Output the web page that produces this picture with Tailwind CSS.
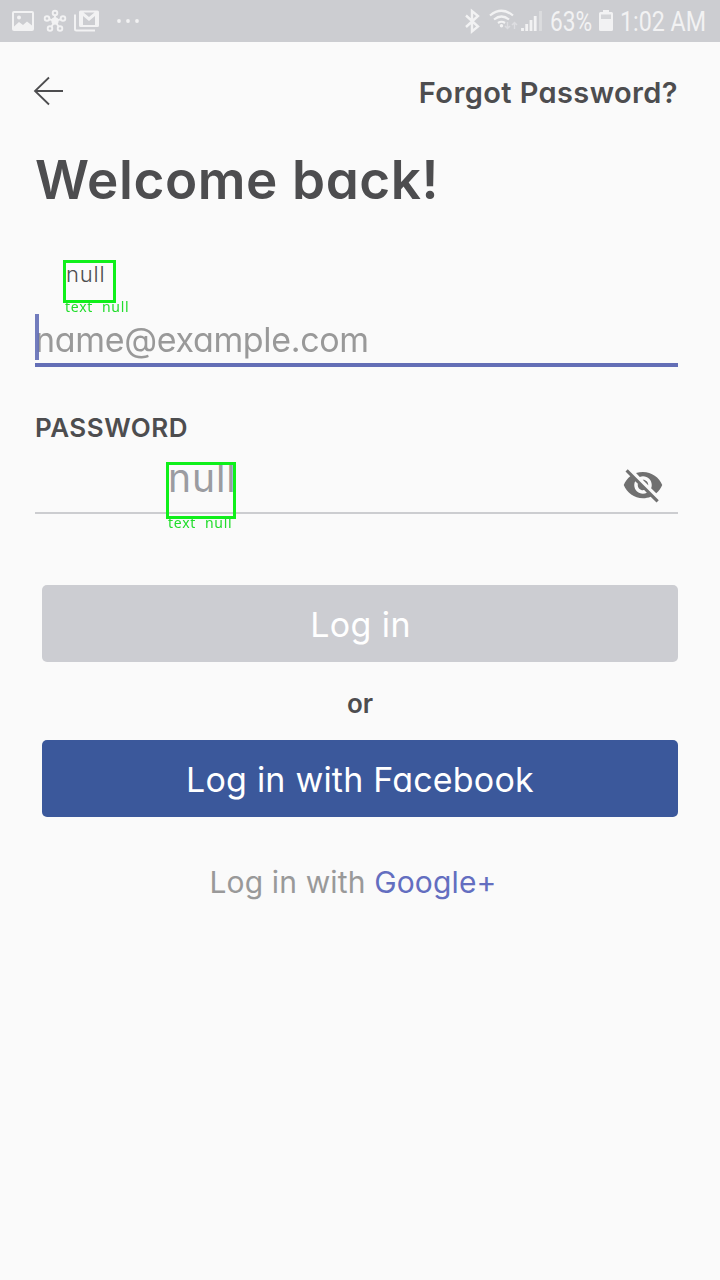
<!DOCTYPE html>
<html lang="en">
<head>
<meta charset="utf-8">
<title>Log in</title>
<script src="https://cdn.jsdelivr.net/npm/@tailwindcss/browser@4"></script>
</head>
<body class="bg-[#fafafa]">
<div class="w-[720px] h-[1280px] overflow-hidden flex flex-col bg-[#fafafa] text-[#4d4d4f] font-['Inter','Lato',sans-serif] [font-feature-settings:'cv11'] whitespace-nowrap">
  <header class="h-[42px] shrink-0 bg-[#cccdd1] flex items-center text-[#f2f2f3]">
    <svg class="w-[150px] h-[42px]" viewBox="0 0 150 42" fill="none" stroke="currentColor">
      <path fill="currentColor" stroke="none" fill-rule="evenodd" d="M14 11h18q2 0 2 2v16q0 2-2 2H14q-2 0-2-2V13q0-2 2-2zm0 2v13.500l5-4.500 4 3 4-3.500 5 4V13zM17 17.500a2 2 0 1 0 4 0a2 2 0 1 0-4 0z"/>
      <g stroke-width="1.900"><circle cx="55" cy="21" r="2.700" fill="currentColor"/><circle cx="55" cy="13" r="2.300"/><circle cx="47" cy="18.500" r="2.300"/><circle cx="63" cy="18.500" r="2.300"/><circle cx="50" cy="28.500" r="2.300"/><circle cx="60" cy="28.500" r="2.300"/><path d="M55 15v4M49 19.200l4 1.200M61 19.200l-4 1.200M51.300 26.700l2-3M58.700 26.700l-2-3"/></g>
      <path stroke-width="2" d="M75 14.500V29q0 1.500 1.500 1.500H95"/>
      <path fill="currentColor" stroke="none" fill-rule="evenodd" d="M80.500 10.500h17q1.500 0 1.500 1.500v13.500q0 1.500-1.500 1.500h-17q-1.500 0-1.500-1.500V12q0-1.500 1.500-1.500zM83.500 12.500L89 17l5.500-4.500zM83 16v9h12v-9l-6 5z"/>
      <g fill="currentColor" stroke="none"><circle cx="119" cy="21" r="1.900"/><circle cx="128" cy="21" r="1.900"/><circle cx="137" cy="21" r="1.900"/></g>
    </svg>
    <svg class="w-[84px] h-[42px] ml-[310px]" viewBox="460 0 84 42" fill="none" stroke="currentColor">
      <path stroke-width="2.400" d="M466 15.500l12 11-6 5V11l6 5-12 11"/>
      <g stroke-width="2.200"><path d="M490 15.500q11.500-9.500 23 0M494 19.500q7.500-6 15 0M498 23q3.500-2.500 7 0"/></g>
      <circle cx="501.500" cy="25.800" r="1.700" fill="currentColor" stroke="none"/>
      <path stroke-width="1.500" opacity=".45" d="M507.500 22v6.500m-2.500-2.500l2.500 2.500 2.500-2.500M514.500 29v-6.500m-2.500 2.500l2.500-2.500 2.500 2.500"/>
      <g stroke-width="2.800"><path d="M522.500 31v-3M526.700 31v-7M531 31v-11M535.200 31v-15"/><path opacity=".4" d="M540.500 31V11"/></g>
    </svg>
    <span class="ml-[6px] w-[49px] text-[27px] leading-[42px] font-['Roboto',sans-serif]"><span class="inline-block origin-left scale-x-[.84] pt-[2px]">63%</span></span>
    <svg class="w-[15px] h-[42px]" viewBox="0 0 15 42"><path fill="currentColor" d="M1.500 12H4v-2h6v2h2.500Q14 12 14 13.500v16q0 1.500-1.500 1.500h-11Q0 31 0 29.500v-16Q0 12 1.500 12z"/><path fill="#cccdd1" opacity=".8" d="M2 14.500h10V19H2z"/></svg>
    <span class="ml-[6px] text-[27px] leading-[42px] font-['Roboto',sans-serif]"><span class="inline-block origin-left scale-x-[.86] pt-[2px]">1:02 AM</span></span>
  </header>

  <nav class="h-[102px] shrink-0 pl-[33px] pr-[42px] flex items-center justify-between">
    <svg class="w-8 h-8 mb-1" viewBox="0 0 32 32" fill="none" stroke="currentColor" stroke-width="1.800"><path d="M30 16H2M16 2.500L2 16l14 13.500"/></svg>
    <span class="text-[29px] font-[580] tracking-[.4px]">Forgot Password?</span>
  </nav>

  <h1 class="h-[72px] shrink-0 pt-[2px] pl-[35px] flex items-center text-[53px] font-[560] tracking-[.6px]">Welcome back!</h1>

  <main class="flex flex-col pt-[98px] pl-[35px] pr-[42px] relative">
    <div class="absolute left-[63px] top-[44px] w-[53px] h-[43px] border-3 border-[#0ff01a] text-[22px] leading-[22px] font-light tracking-[.8px]">null</div>
    <div class="absolute left-[65px] top-[83px] text-[14px] leading-[16px] text-[#22dd2c] font-['Noto_Sans',sans-serif] tracking-[.75px] will-change-transform">text&nbsp; null</div>

    <div class="h-[53px] border-b-4 border-[#636eb6] relative flex items-center pt-[2px] text-[34px] text-[#999] tracking-[-.33px]">
      <span>name@example.com</span>
      <span class="absolute left-0 top-0 w-1 h-[46px] bg-[#636eb6]/90"></span>
    </div>
    <label class="mt-[42px] h-9 flex items-center text-[26px] font-[580] tracking-[.5px]">PASSWORD</label>
    <div class="h-[69px] border-b-2 border-[#cccdd0] flex justify-end pr-[14px] pt-[19px]">
      <svg class="w-[42px] h-[42px]" viewBox="0 0 24 24" fill="#707070"><path d="M12 7c2.760 0 5 2.240 5 5 0 .65-.13 1.260-.36 1.830l2.920 2.920c1.510-1.260 2.700-2.890 3.430-4.750-1.730-4.390-6-7.500-11-7.500-1.400 0-2.740.25-3.980.7l2.160 2.160C10.740 7.130 11.350 7 12 7zM2 4.270l2.280 2.280.46.460C3.080 8.300 1.780 10.020 1 12c1.730 4.390 6 7.500 11 7.500 1.550 0 3.030-.3 4.380-.84l.42.420L19.730 22 21 20.730 3.270 3 2 4.270zM7.530 9.800l1.550 1.550c-.05.21-.08.43-.08.65 0 1.660 1.340 3 3 3 .22 0 .44-.03.65-.08l1.550 1.550c-.67.33-1.410.53-2.200.53-2.760 0-5-2.240-5-5 0-.79.2-1.530.53-2.200zm4.310-.78l3.150 3.150.02-.16c0-1.660-1.340-3-3-3l-.17.010z"/></svg>
    </div>
    <div class="absolute left-[166px] top-[246px] w-[70px] h-[57px] text-[39px] leading-[32px] text-[#9b9ca1] tracking-[.9px] pl-[2px]">null<span class="absolute inset-0 border-3 border-[#0ff01a]"></span></div>
    <div class="absolute left-[168px] top-[299px] text-[14px] leading-[16px] text-[#22dd2c] font-['Noto_Sans',sans-serif] tracking-[.75px] will-change-transform">text&nbsp; null</div>
  </main>

  <section class="pt-[71px] px-[42px] flex flex-col text-center">
    <button class="h-[77px] rounded-[5px] bg-[#cccdd2] text-white text-[34px] tracking-[.4px] pt-[2px] pl-[1px]">Log in</button>
    <p class="h-[78px] pt-1 flex items-center justify-center text-[26px] font-semibold">or</p>
    <button class="h-[77px] rounded-[5px] bg-[#3b589b] text-white text-[34px] tracking-[.2px] pt-[2px]">Log in with Facebook</button>
    <p class="h-[130px] pr-[14px] flex items-center justify-center text-[30px] tracking-[.15px] text-[#999]"><span>Log in with <span class="text-[#636ec0]">Google+</span></span></p>
  </section>
</div>
</body>
</html>
